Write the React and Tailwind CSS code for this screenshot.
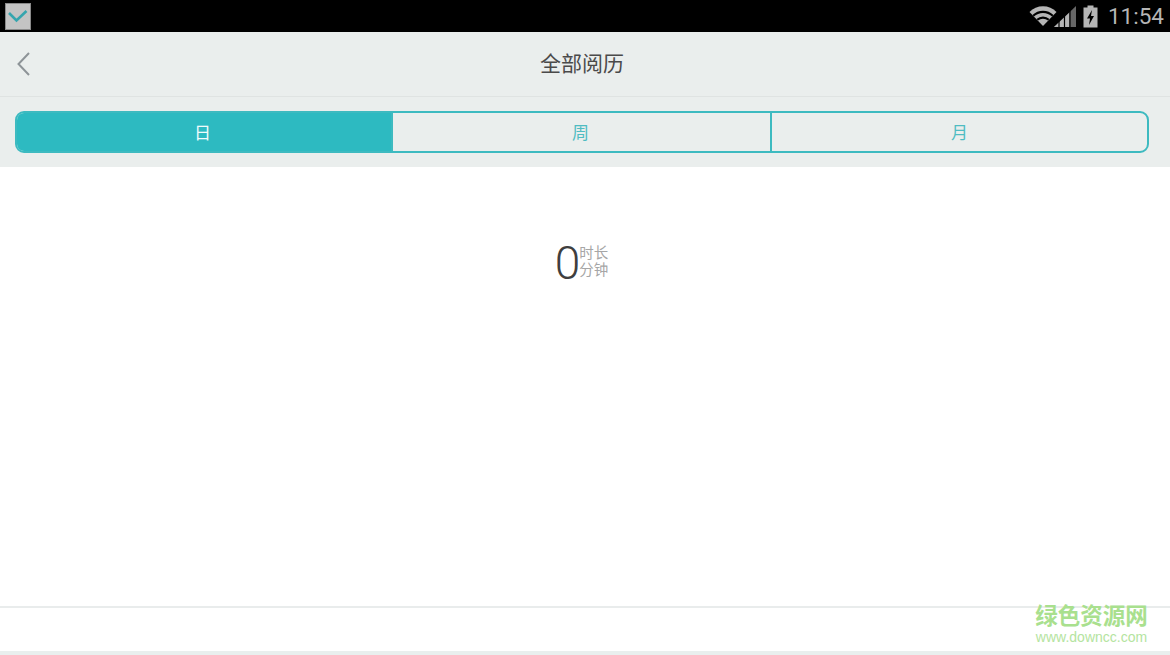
const CJK = '"Roboto","Noto Sans CJK SC",sans-serif';

function Notification() {
  return (
    <div className="ml-[5px] mt-px w-[26px] h-[27px] bg-[#c4c4c4] border border-[#8a8a8a] flex items-center justify-center">
      <svg width="20" height="14" viewBox="0 0 20 14" fill="none">
        <path d="M1 3 L8.5 10.5 L18.5 1" stroke="#35a5ae" strokeWidth="2.6" />
      </svg>
    </div>
  );
}

function StatusIcons() {
  return (
    <div className="flex items-center">
      <svg width="28" height="22" viewBox="0 0 28 22">
        <path d="M0.5 7 A19 19 0 0 1 27.5 7 L14 21 Z" fill="#b5b5b5" />
        <path d="M3.5 10 A15 15 0 0 1 24.5 10 L23 11.6 A13 13 0 0 0 5 11.6 Z" fill="#000" />
        <path d="M7.5 14 A9.5 9.5 0 0 1 20.5 14 L19 15.6 A7.5 7.5 0 0 0 9 15.6 Z" fill="#000" />
      </svg>
      <svg width="23" height="22" viewBox="0 0 23 22" className="-ml-[3px]">
        <path d="M0 22 L22 1 L22 22 Z" fill="#666" />
        <path d="M0 22 L15 8 L15 22 Z" fill="#b5b5b5" />
        <path d="M5 22 V16 M10.5 22 V11 M16 22 V5" stroke="#000" strokeWidth="1.2" />
      </svg>
      <svg width="15" height="23" viewBox="0 0 15 23" className="ml-[6px]">
        <path d="M4.5 0.5 H10.5 V2.5 H14.5 V22.5 H0.5 V2.5 H4.5 Z" fill="#b5b5b5" />
        <path d="M9 5 L4 13.5 H7 L6 20 L11 11 H8 Z" fill="#000" />
      </svg>
      <span
        className="ml-[10px] mr-[6px] text-[22.5px] leading-none text-[#b5b5b5]"
        style={{ fontFamily: '"Roboto",sans-serif' }}
      >
        11:54
      </span>
    </div>
  );
}

export default function App() {
  return (
    <div className="w-[1170px] h-[655px] relative overflow-hidden bg-white flex flex-col" style={{ fontFamily: CJK }}>
      <div className="h-8 bg-black flex items-center justify-between shrink-0">
        <Notification />
        <StatusIcons />
      </div>

      <div className="h-[65px] shrink-0 bg-[#eaeeed] border-b border-[#dfe3e2] flex items-center justify-center pr-[6px] relative">
        <svg width="16" height="26" viewBox="0 0 16 26" fill="none" className="absolute left-[16px] top-[19px]">
          <path d="M13 2 L2.5 13 L13 24" stroke="#8e9498" strokeWidth="2" />
        </svg>
        <span className="text-[21px] text-[#4a4a4a] leading-none">全部阅历</span>
      </div>

      <div className="h-[70px] shrink-0 bg-[#eaeeed] px-[15px] pt-[14px]">
        <div className="h-[42px] w-[1134px] rounded-[9px] border-2 border-[#3dbac0] flex overflow-hidden text-[17px] leading-none">
          <div className="w-[374px] bg-[#2dbac1] text-[#f0fbfb] flex items-center justify-center pt-[3px] pr-[3px]">日</div>
          <div className="w-[2px] bg-[#3dbac0]" />
          <div className="w-[377px] text-[#4fbcc2] flex items-center justify-center pt-[3px] pr-[2px]">周</div>
          <div className="w-[2px] bg-[#3dbac0]" />
          <div className="flex-1 text-[#4fbcc2] flex items-center justify-center pt-[3px]">月</div>
        </div>
      </div>

      <div className="flex-1 flex flex-col bg-white">
        <div className="h-[441px] shrink-0 border-b-2 border-[#e9ecec] flex justify-center pt-[73px]">
          <div className="flex items-center h-[44px] ml-[-7px]">
            <span className="text-[46px] leading-none text-[#3f3f3f] font-light pt-[2px]" style={{ fontFamily: '"Roboto",sans-serif' }}>0</span>
            <div className="flex flex-col text-[14.5px] leading-[17px] text-[#a6a6a6] ml-[-1px]">
              <span>时长</span>
              <span>分钟</span>
            </div>
          </div>
        </div>
        <div className="flex-1" />
        <div className="h-[4px] shrink-0 bg-[#e9efee]" />
      </div>

      <div className="absolute left-[1035px] top-[603px] flex flex-col items-center w-[113px] pointer-events-none">
        <span className="text-[22.5px] leading-[27px] font-bold text-[#a9e08e] whitespace-nowrap">绿色资源网</span>
        <span className="text-[14px] leading-[15px] text-[#b4e4a0] whitespace-nowrap" style={{ fontFamily: '"Liberation Sans",sans-serif' }}>www.downcc.com</span>
      </div>
    </div>
  );
}
